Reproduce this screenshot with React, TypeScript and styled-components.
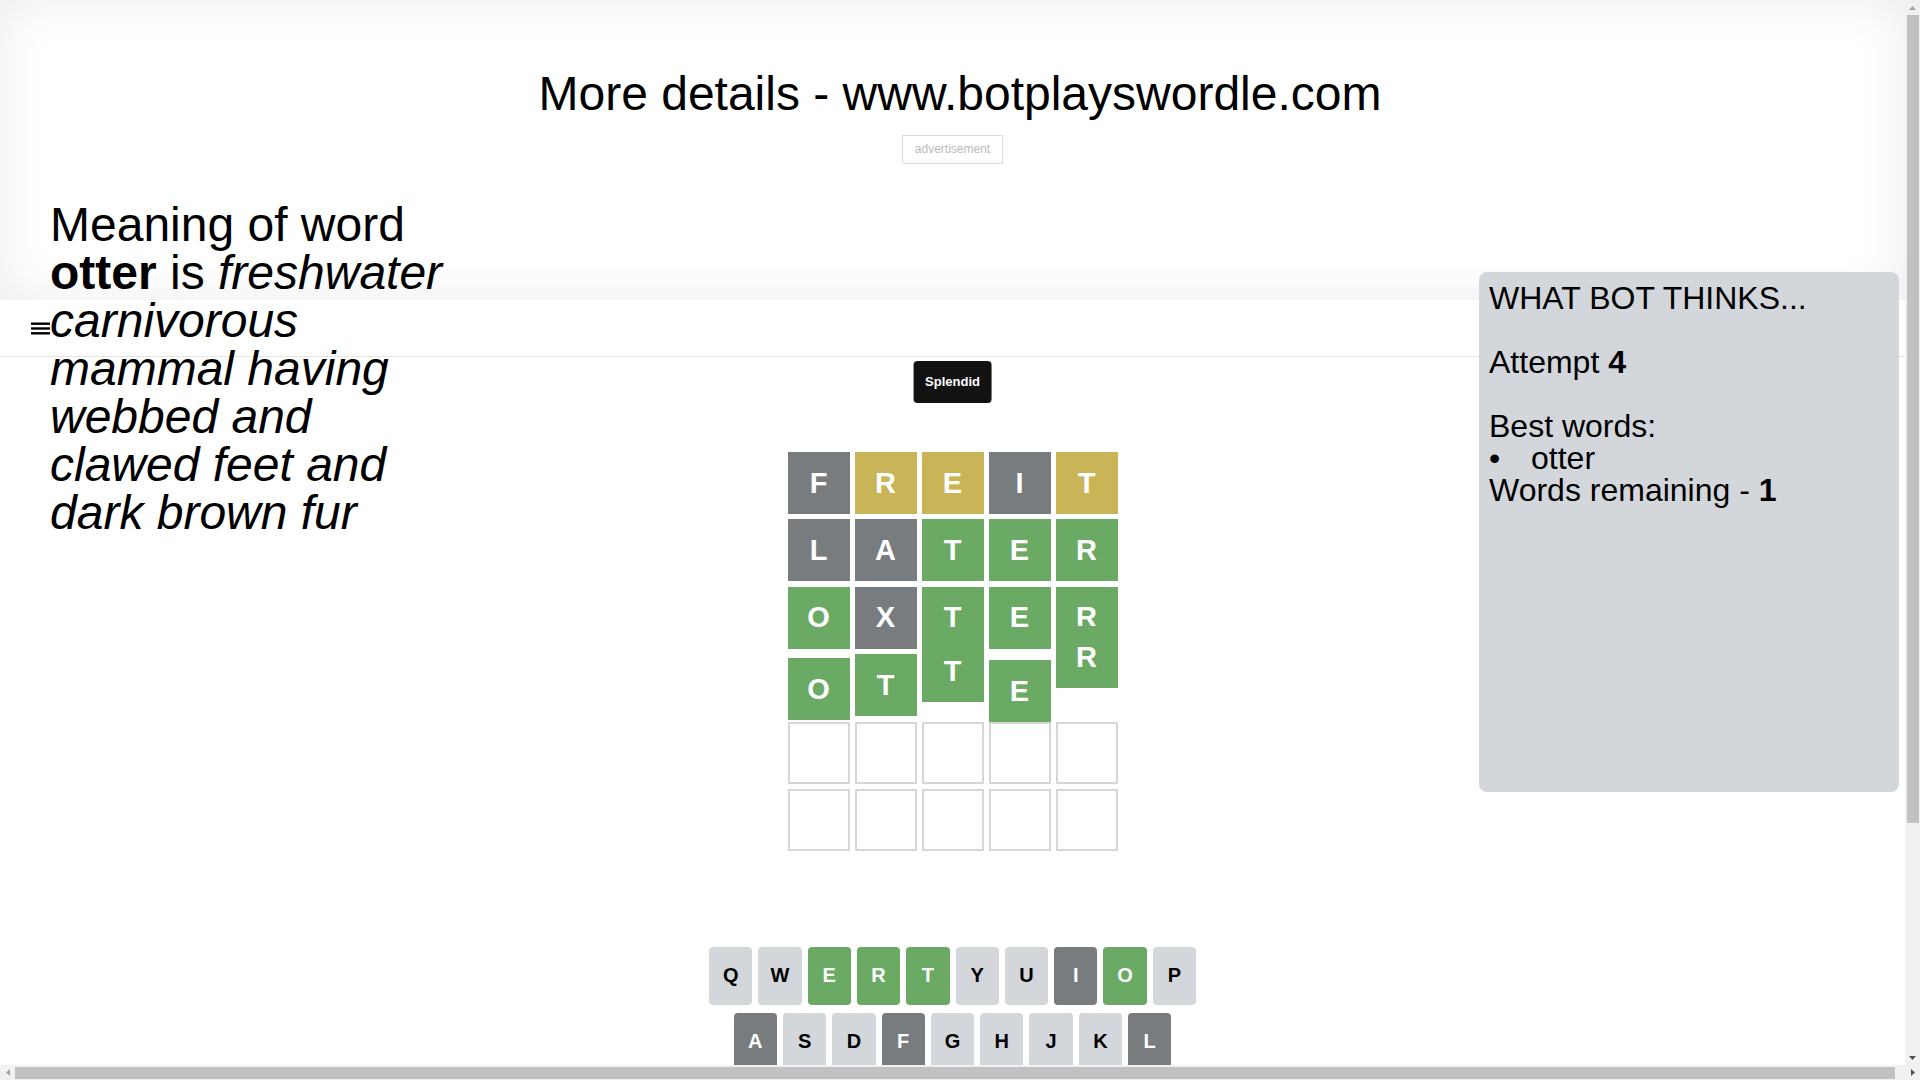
import React from "react";
import styled, { createGlobalStyle } from "styled-components";

type CellState = "empty" | "absent" | "present" | "correct";
type KeyState = "unused" | "absent" | "present" | "correct";
type ArrowDir = "up" | "down" | "left" | "right";

interface ICell {
  letter: string;
  state: CellState;
  lift?: number;
}

const palette = {
  absent: "#787c7e",
  present: "#c9b458",
  correct: "#6aaa64",
  unused: "#d3d6da",
  empty: "#ffffff",
};

const barSize = 15;

const GlobalStyle = createGlobalStyle`
  html,
  body {
    margin: 0;
    padding: 0;
    overflow: hidden;
  }

  body {
    font-family: "Liberation Sans", Arial, sans-serif;
    color: #000000;
    background: #ffffff;
  }
`;

/* browser window: page area plus the classic scrollbars */
const Window = styled.div`
  display: flex;
  flex-direction: column;
  width: 100vw;
  height: 100vh;
`;

const WindowBody = styled.div`
  flex: 1;
  min-height: 0;
  display: flex;
`;

const Content = styled.div`
  flex: 1;
  min-width: 0;
  overflow: hidden;
`;

const VScrollbar = styled.div`
  flex: 0 0 ${barSize}px;
  display: flex;
  flex-direction: column;
  background: #f1f1f1;
`;

const HScrollbar = styled.div`
  flex: 0 0 ${barSize}px;
  display: flex;
  background: #f1f1f1;
`;

const ScrollButton = styled.div`
  flex: 0 0 ${barSize}px;
  width: ${barSize}px;
  height: ${barSize}px;
  display: flex;
  align-items: center;
  justify-content: center;
`;

const Track = styled.div`
  flex: 1;
  display: flex;
`;

const VThumb = styled.div`
  height: 808px;
  width: 12px;
  margin-left: 2px;
  background: #c1c1c1;
`;

const HThumb = styled.div`
  width: 1880px;
  height: 12px;
  margin-top: 2px;
  background: #c1c1c1;
`;

const Page = styled.div`
  position: relative;
  padding-bottom: 229px;
`;

const Header = styled.header`
  height: 300px;
  display: flex;
  flex-direction: column;
  align-items: center;
  box-shadow: inset 0 0 50px rgba(0, 0, 0, 0.08);
`;

const Title = styled.h1`
  flex-shrink: 0;
  align-self: flex-start;
  width: 100vw;
  margin: 66px 0 0;
  font-size: 48px;
  font-weight: 400;
  line-height: 1.15;
  text-align: center;
`;

const AdSlot = styled.div`
  flex-shrink: 0;
  margin-top: 14px;
  padding: 6px 12px;
  border: 1px solid #dddddd;
  font-size: 12px;
  line-height: 15px;
  color: #bbbbbb;
`;

const Meaning = styled.p`
  flex-shrink: 0;
  align-self: flex-start;
  width: 410px;
  margin: 37px 0 0 50px;
  font-size: 48px;
  line-height: 48px;
`;

const NavBar = styled.nav`
  height: 56px;
  display: flex;
  align-items: center;
  padding-left: 31px;
  border-bottom: 1px solid #e5e5e5;
`;

const Main = styled.main`
  position: relative;
  padding-top: 95px;
`;

const Toast = styled.div`
  position: absolute;
  top: 4px;
  left: 50%;
  transform: translateX(-50%);
  padding: 12px;
  border-radius: 4px;
  background: #121212;
  color: #ffffff;
  font-size: 13px;
  font-weight: 700;
  line-height: 18px;
`;

const Grid = styled.div`
  display: flex;
  flex-direction: column;
  align-items: center;
  gap: 5.4px;
`;

const GridRow = styled.div`
  display: flex;
  gap: 5px;
`;

const Tile = styled.div<{ $state: CellState; $lift: number }>`
  width: 62px;
  height: 62px;
  box-sizing: border-box;
  display: flex;
  align-items: center;
  justify-content: center;
  border: 2px solid
    ${(props) => (props.$state === "empty" ? "#d3d6da" : palette[props.$state])};
  background: ${(props) => palette[props.$state]};
  color: #ffffff;
  font-size: 29px;
  font-weight: 700;
  transform: translateY(${(props) => props.$lift}px);
`;

const Keyboard = styled.div`
  display: flex;
  flex-direction: column;
  align-items: center;
  gap: 8px;
  margin-top: 96px;
`;

const KeyRow = styled.div`
  display: flex;
  gap: 6px;
`;

const Key = styled.div<{ $state: KeyState; $wide?: boolean }>`
  width: ${(props) => (props.$wide ? 65 : 43.3)}px;
  height: 58px;
  display: flex;
  align-items: center;
  justify-content: center;
  border-radius: 4px;
  background: ${(props) => palette[props.$state]};
  color: ${(props) => (props.$state === "unused" ? "#000000" : "#ffffff")};
  font-size: ${(props) => (props.$wide ? 13 : 20)}px;
  font-weight: 700;
`;

const BotPanel = styled.aside`
  position: absolute;
  top: 272px;
  right: 6px;
  width: 420px;
  height: 520px;
  box-sizing: border-box;
  padding: 10px;
  border-radius: 8px;
  background: #d3d6da;
  font-size: 32px;
  line-height: 32px;
`;

const PanelLine = styled.div<{ $spaced?: boolean }>`
  margin-bottom: ${(props) => (props.$spaced ? 32 : 0)}px;
`;

const BestList = styled.ul`
  list-style: none;
  margin: 0;
  padding: 0;
`;

const BestItem = styled.li`
  display: flex;
`;

const Bullet = styled.span`
  width: 42px;
`;

function MenuIcon(): JSX.Element {
  return (
    <svg width="19" height="13" viewBox="0 0 19 13" aria-hidden="true">
      <rect x="0" y="0.5" width="19" height="2.4" fill="#000" />
      <rect x="0" y="5.3" width="19" height="2.4" fill="#000" />
      <rect x="0" y="10.1" width="19" height="2.4" fill="#000" />
    </svg>
  );
}

const arrowPoints: Record<ArrowDir, string> = {
  up: "0,4 7,4 3.5,0",
  down: "0,0 7,0 3.5,4",
  left: "4,0 4,7 0,3.5",
  right: "0,0 0,7 4,3.5",
};

function Arrow({ dir, muted }: { dir: ArrowDir; muted?: boolean }): JSX.Element {
  const flat = dir === "up" || dir === "down";
  return (
    <svg
      width={flat ? 7 : 4}
      height={flat ? 4 : 7}
      viewBox={flat ? "0 0 7 4" : "0 0 4 7"}
      aria-hidden="true"
    >
      <polygon points={arrowPoints[dir]} fill={muted ? "#a3a3a3" : "#505050"} />
    </svg>
  );
}

const guesses: ICell[][] = [
  [
    { letter: "F", state: "absent" },
    { letter: "R", state: "present" },
    { letter: "E", state: "present" },
    { letter: "I", state: "absent" },
    { letter: "T", state: "present" },
  ],
  [
    { letter: "L", state: "absent" },
    { letter: "A", state: "absent" },
    { letter: "T", state: "correct" },
    { letter: "E", state: "correct" },
    { letter: "R", state: "correct" },
  ],
  [
    { letter: "O", state: "correct" },
    { letter: "X", state: "absent" },
    { letter: "T", state: "correct" },
    { letter: "E", state: "correct" },
    { letter: "R", state: "correct" },
  ],
  // winning row, caught mid-bounce
  [
    { letter: "O", state: "correct", lift: 4 },
    { letter: "T", state: "correct", lift: 0 },
    { letter: "T", state: "correct", lift: -14 },
    { letter: "E", state: "correct", lift: 6 },
    { letter: "R", state: "correct", lift: -28 },
  ],
];

const emptyRow: ICell[] = Array.from({ length: 5 }, () => ({
  letter: "",
  state: "empty" as CellState,
}));

const rows: ICell[][] = [...guesses, emptyRow, emptyRow];

const keyStates: Record<string, KeyState> = {
  E: "correct",
  R: "correct",
  T: "correct",
  O: "correct",
  I: "absent",
  A: "absent",
  F: "absent",
  L: "absent",
  X: "absent",
};

const keyRows = [
  ["Q", "W", "E", "R", "T", "Y", "U", "I", "O", "P"],
  ["A", "S", "D", "F", "G", "H", "J", "K", "L"],
  ["ENTER", "Z", "X", "C", "V", "B", "N", "M", "DELETE"],
];

function App(): JSX.Element {
  return (
    <>
      <GlobalStyle />
      <Window>
        <WindowBody>
          <Content>
            <Page>
              <Header>
                <Title>More details - www.botplayswordle.com</Title>
                <AdSlot>advertisement</AdSlot>
                <Meaning>
                  Meaning of word <b>otter</b> is{" "}
                  <i>
                    freshwater carnivorous mammal having webbed and clawed feet
                    and dark brown fur
                  </i>
                </Meaning>
              </Header>

              <NavBar>
                <MenuIcon />
              </NavBar>

              <Main>
                <Toast>Splendid</Toast>
                <Grid>
                  {rows.map((row, r) => (
                    <GridRow key={r}>
                      {row.map((cell, c) => (
                        <Tile key={c} $state={cell.state} $lift={cell.lift ?? 0}>
                          {cell.letter}
                        </Tile>
                      ))}
                    </GridRow>
                  ))}
                </Grid>

                <Keyboard>
                  {keyRows.map((row, r) => (
                    <KeyRow key={r}>
                      {row.map((k) => (
                        <Key
                          key={k}
                          $state={keyStates[k] ?? "unused"}
                          $wide={k.length > 1}
                        >
                          {k}
                        </Key>
                      ))}
                    </KeyRow>
                  ))}
                </Keyboard>
              </Main>

              <BotPanel>
                <PanelLine $spaced>WHAT BOT THINKS...</PanelLine>
                <PanelLine $spaced>
                  Attempt <b>4</b>
                </PanelLine>
                <PanelLine>Best words:</PanelLine>
                <BestList>
                  <BestItem>
                    <Bullet>•</Bullet>
                    otter
                  </BestItem>
                </BestList>
                <PanelLine>
                  Words remaining - <b>1</b>
                </PanelLine>
              </BotPanel>
            </Page>
          </Content>

          <VScrollbar>
            <ScrollButton>
              <Arrow dir="up" muted />
            </ScrollButton>
            <Track>
              <VThumb />
            </Track>
            <ScrollButton>
              <Arrow dir="down" />
            </ScrollButton>
          </VScrollbar>
        </WindowBody>

        <HScrollbar>
          <ScrollButton>
            <Arrow dir="left" muted />
          </ScrollButton>
          <Track>
            <HThumb />
          </Track>
          <ScrollButton>
            <Arrow dir="right" />
          </ScrollButton>
        </HScrollbar>
      </Window>
    </>
  );
}

export default App;
